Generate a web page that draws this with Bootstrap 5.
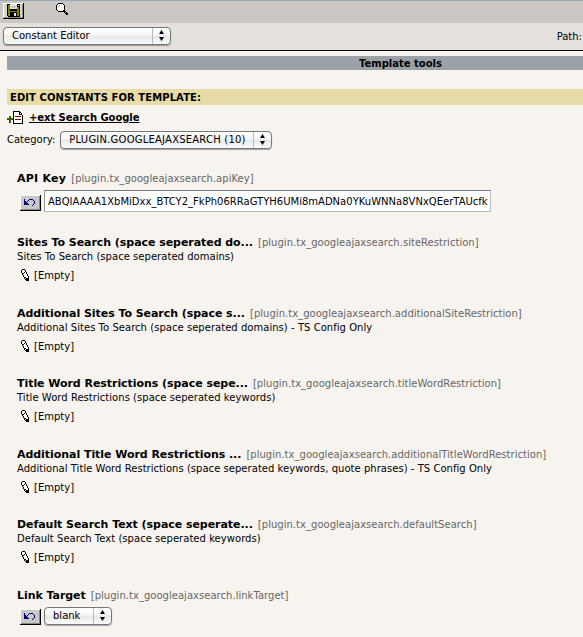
<!DOCTYPE html>
<html lang="en"><head><meta charset="utf-8"><title>Template tools</title>
<link href="https://cdn.jsdelivr.net/npm/bootstrap@5.3.0/dist/css/bootstrap.min.css" rel="stylesheet">
<style>
body{background:#f7f4ef;color:#000;font:10px/14px "DejaVu Sans",Verdana,sans-serif;overflow:hidden;height:637px}
.topbar{height:23px;background:#cbc7c3;border-top:1px solid #9fa6ba;padding:2px 0 0 3px}
.ico{display:block;flex:none;shape-rendering:crispEdges}
.lens{margin-left:32px}
.subbar{height:28px;background:#e4e0db;border-bottom:1px solid #000;padding:4px 1px 0 3px}
.path{padding-top:3px}
.pop{height:18px;border:1px solid #777;border-radius:4px;background:linear-gradient(#fff,#f6f6f6 45%,#e7e7e7 50%,#fbfbfb);box-shadow:0 1px 1px #0005;padding-left:8px;flex:none}
.pop-mode{width:168px}
.pop-cat{width:212px;margin-left:5px;letter-spacing:.215px}
.pop-link{width:68px;margin-left:3px}
.arr{width:18px;height:16px;border-left:1px solid #bbb;padding:2px 0 0 6px}
.tools{height:14px;background:#9ba1a8;margin:5px 0 0 7px;padding-left:352px;line-height:15px}
.sect{height:16px;background:#e7dba8;margin:19px 0 0 7px;padding-left:3px;line-height:17px;letter-spacing:.085px}
.ext{height:25px;padding:5px 0 0 7px}
.ext a{color:#000;margin-left:6px;line-height:15px;letter-spacing:-.05px;text-underline-offset:1px}
.cat{height:19px;padding-left:7px}
.items{padding:23px 0 0 17px}
.item{height:70.6px}
.item-api{height:64px}
.name{font-size:11px;letter-spacing:-.05px}
.name-short{letter-spacing:.25px}
.key{color:#666;margin-left:5px;letter-spacing:.03px}
.desc{letter-spacing:.037px}
.val{margin-top:5px;padding-left:4px}
.val span{margin-left:4px}
.ctl{padding-left:3px}
.undo{margin-bottom:1px}
.ctl-link .undo{margin-bottom:0}
.field{width:447px;height:22px;background:#fff;border:1px solid #bbb;border-top:1px solid #777;border-left-color:#999;padding:4px 0 0 3px;margin-left:3px;letter-spacing:.01px}
</style>
<script src="https://cdn.jsdelivr.net/npm/bootstrap@5.3.0/dist/js/bootstrap.bundle.min.js"></script>
</head><body class="text-nowrap">
<svg class="d-none">
<symbol id="updown" viewBox="0 0 5 12"><path d="M2.5 0 5 4H0zM0 7h5L2.5 11z"/></symbol>
<symbol id="undo" viewBox="0 0 21 16"><path fill="#cbc7c3" d="M0 0h21v16H0z"/><path fill="#fff" d="M0 0h20v1H1v14H0z"/><path fill="#000" d="M20 0h1v16H0v-1h20z"/><path fill="#888" d="M19 1h1v14H1v-1h18z"/><path fill="#00007f" d="M4 4h1v2h1v1h1v1h1v1h1v1H4zM7 6h1v1H7zM8 5h1v1H8zM9 4h4v1H9zM13 5h1v1h-1zM14 6h1v3h-1zM13 9h1v1h-1zM12 10h1v1h-1z"/></symbol>
<symbol id="pencil" viewBox="0 0 9 12"><path fill="#fff" d="M1 1h3v2h1v2h1v2h1v2H4V7H3V5H2V3H1z"/><path d="M1 0h3v1H1zM0 1h1v3H0zM4 1h1v2H4zM1 4h1v2H1zM5 3h1v2H5zM3 3h1v1H3zM2 4h1v1H2zM2 6h1v2H2zM6 5h1v2H6zM3 8h1v2H3zM7 7h1v4H7zM4 10h1v1H4zM5 9h2v3H5zM4 8h1v1H4zM7 11h1v1H7z"/></symbol>
</svg>
<div class="topbar d-flex align-items-start">
<svg class="ico" width="21" height="16"><path fill="#d8d5d0" d="M0 0h21v16H0z"/><path fill="#fff" d="M0 0h20v1H1v14H0z"/><path d="M20 0h1v16H0v-1h20z"/><path fill="#888" d="M19 1h1v14H1v-1h18z"/><path d="M4 1h13v13H5v-1H4z"/><path fill="#7f7f00" d="M5 2h2v6h7V4h2v9H5z"/><path d="M7 9h7v4H7z"/><path fill="#e8e5df" d="M7 1h7v5H7zM11 10h2v3h-2zM15 2h1v1h-1z"/><path fill="#aaa" d="M8 3h1v1H8zM10 3h1v1h-1zM12 3h1v1h-1zM9 4h1v1H9zM11 4h1v1h-1z"/></svg>
<svg class="ico lens" width="13" height="13"><path fill="#fff" d="M2 1h5v1h1v5H7v1H2V7H1V2h1z"/><path d="M2 0h5v1H2zM1 1h1v1H1zM7 1h1v1H7zM0 2h1v5H0zM8 2h1v5H8zM1 7h1v1H1zM7 7h2v1h1v1h1v1h1v2h-2v-1H9v-1H8V9H7zM2 8h5v1H2z"/><path fill="#999" d="M2 3h1v1H2zM3 2h1v1H3zM9 9h1v1H9z"/></svg>
</div>
<div class="subbar d-flex justify-content-between">
<div class="pop pop-mode d-flex justify-content-between"><span class="lh-base">Constant Editor</span><span class="arr"><svg class="d-block" width="5" height="12"><use href="#updown"/></svg></span></div>
<span class="path">Path:</span></div>
<div class="tools fw-bold">Template tools</div>
<div class="sect fw-bold">EDIT CONSTANTS FOR TEMPLATE:</div>
<div class="ext d-flex"><svg class="ico" width="16" height="15"><path fill="#360" d="M2 6h2v2h2v2H4v3H2v-3H0V8h2z"/><path fill="#fff" d="M7 2h5v3h3v8H7z"/><path d="M6 1h7v1H7v11h8V5h1v9H6zM12 2h1v2h2v1h-3zM13 2h1v1h-1zM14 3h1v1h-1z"/><path fill="#800000" d="M8 6h6v1H8zM8 9h6v1H8z"/></svg><a href="#" class="fw-bold">+ext Search Google</a></div>
<div class="cat d-flex align-items-center"><span>Category:</span>
<div class="pop pop-cat d-flex justify-content-between"><span class="lh-base">PLUGIN.GOOGLEAJAXSEARCH (10)</span><span class="arr"><svg class="d-block" width="5" height="12"><use href="#updown"/></svg></span></div></div>
<main class="items">
<div class="item-api"><div class="d-flex"><b class="name name-short">API Key</b><span class="key">[plugin.tx_googleajaxsearch.apiKey]</span></div>
<div class="ctl d-flex align-items-end pt-1"><svg class="ico undo" width="21" height="16"><use href="#undo"/></svg><div class="field overflow-hidden">ABQIAAAA1XbMiDxx_BTCY2_FkPh06RRaGTYH6UMi8mADNa0YKuWNNa8VNxQEerTAUcfk</div></div></div>
<div class="item"><div class="d-flex"><b class="name">Sites To Search (space seperated do...</b><span class="key">[plugin.tx_googleajaxsearch.siteRestriction]</span></div><div class="desc">Sites To Search (space seperated domains)</div><div class="val d-flex"><svg class="ico" width="9" height="12"><use href="#pencil"/></svg><span>[Empty]</span></div></div>
<div class="item"><div class="d-flex"><b class="name">Additional Sites To Search (space s...</b><span class="key">[plugin.tx_googleajaxsearch.additionalSiteRestriction]</span></div><div class="desc">Additional Sites To Search (space seperated domains) - TS Config Only</div><div class="val d-flex"><svg class="ico" width="9" height="12"><use href="#pencil"/></svg><span>[Empty]</span></div></div>
<div class="item"><div class="d-flex"><b class="name">Title Word Restrictions (space sepe...</b><span class="key">[plugin.tx_googleajaxsearch.titleWordRestriction]</span></div><div class="desc">Title Word Restrictions (space seperated keywords)</div><div class="val d-flex"><svg class="ico" width="9" height="12"><use href="#pencil"/></svg><span>[Empty]</span></div></div>
<div class="item"><div class="d-flex"><b class="name">Additional Title Word Restrictions ...</b><span class="key">[plugin.tx_googleajaxsearch.additionalTitleWordRestriction]</span></div><div class="desc">Additional Title Word Restrictions (space seperated keywords, quote phrases) - TS Config Only</div><div class="val d-flex"><svg class="ico" width="9" height="12"><use href="#pencil"/></svg><span>[Empty]</span></div></div>
<div class="item"><div class="d-flex"><b class="name">Default Search Text (space seperate...</b><span class="key">[plugin.tx_googleajaxsearch.defaultSearch]</span></div><div class="desc">Default Search Text (space seperated keywords)</div><div class="val d-flex"><svg class="ico" width="9" height="12"><use href="#pencil"/></svg><span>[Empty]</span></div></div>
<div><div class="d-flex"><b class="name">Link Target</b><span class="key ps-px">[plugin.tx_googleajaxsearch.linkTarget]</span></div>
<div class="ctl ctl-link d-flex align-items-end pt-1"><svg class="ico undo" width="21" height="16"><use href="#undo"/></svg><div class="pop pop-link d-flex justify-content-between"><span class="lh-base">blank</span><span class="arr"><svg class="d-block" width="5" height="12"><use href="#updown"/></svg></span></div></div></div>
</main>
</body></html>
